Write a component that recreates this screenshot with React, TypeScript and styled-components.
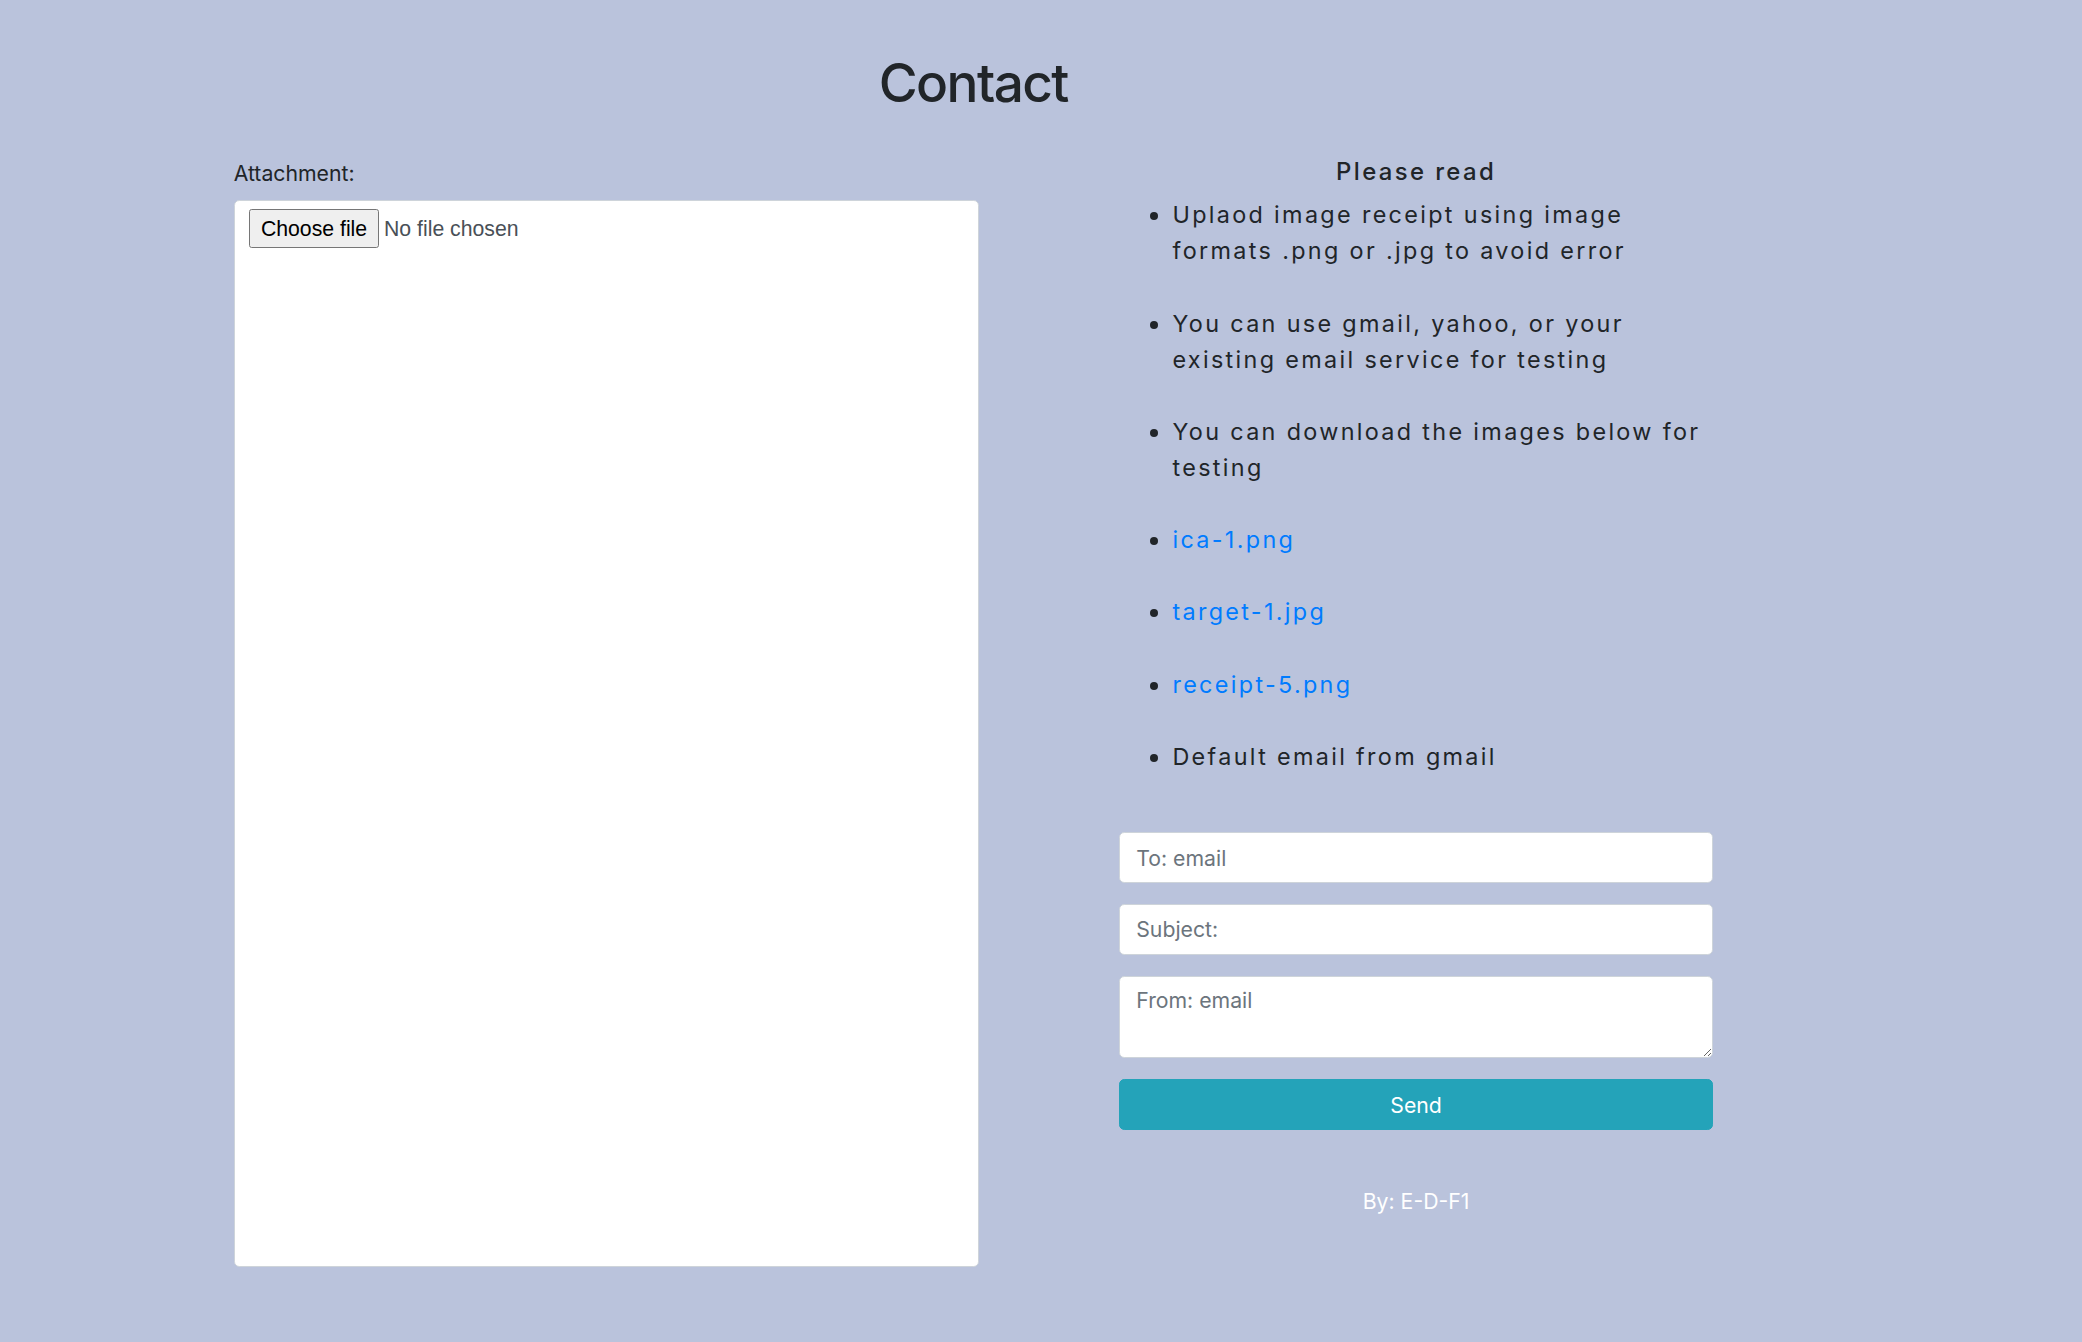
import * as React from 'react';
import styled, { createGlobalStyle } from 'styled-components';

// the reference was taken at ~133% browser zoom, so lay out in its css px and scale once
const SCALE = 2082 / 1568;

const bg = '#bac3dc';
const text = '#212529';
const link = '#007bff';
const info = '#24a3b9';

const GlobalStyle = createGlobalStyle`
  body {
    margin: 0;
    background: ${bg};
    font-family: Inter, "Noto Sans", sans-serif;
    color: ${text};
  }
  * {
    box-sizing: border-box;
  }
`;

const Page = styled.div`
  zoom: ${SCALE};
  min-height: 1011px;
  padding-top: 39px;
`;

const Container = styled.div`
  width: 1114px;
  margin-left: 176px;
`;

const Title = styled.h1`
  margin: 0 0 32px;
  font-size: 40px;
  font-weight: 500;
  line-height: 1.2;
  letter-spacing: -1.2px;
  text-align: center;
  color: ${text};
`;

const Row = styled.div`
  display: grid;
  grid-template-columns: 561px 447px;
  column-gap: 106px;
  align-items: start;
`;

const Label = styled.label`
  display: block;
  margin-bottom: 8px;
  font-size: 16px;
  line-height: 24px;
`;

const FileBox = styled.div`
  height: 803px;
  padding: 6px 11px;
  background: #fff;
  border: 1px solid #ced4da;
  border-radius: 4px;
  display: flex;
  align-items: flex-start;
  gap: 4px;
  font-family: "Liberation Sans", Arial, sans-serif;
  font-size: 16px;
`;

const FileButton = styled.button`
  font-family: inherit;
  font-size: 16px;
  color: #000;
  background: #efefef;
  border: 1px solid #767676;
  border-radius: 2px;
  padding: 5px 8px 4px;
  line-height: normal;
`;

const FileName = styled.span`
  color: #495057;
  line-height: 31px;
`;

const Side = styled.div`
  display: flex;
  flex-direction: column;
`;

const ReadTitle = styled.h5`
  margin: 0 0 8px;
  font-size: 18px;
  font-weight: 500;
  line-height: 1.2;
  letter-spacing: 0.1em;
  text-align: center;
`;

const Notes = styled.ul`
  margin: 0 0 16px;
  padding-left: 40px;
  font-size: 17.6px;
  line-height: 27.2px;
  letter-spacing: 0.1em;
`;

const Note = styled.li`
  margin-bottom: 27.2px;
`;

const FileLink = styled.a`
  color: ${link};
  text-decoration: none;
`;

const Field = styled.input`
  display: block;
  width: 100%;
  height: 38px;
  margin-bottom: 16px;
  padding: 6px 12px;
  font-family: inherit;
  font-size: 16px;
  line-height: 1.5;
  color: #495057;
  background: #fff;
  border: 1px solid #ced4da;
  border-radius: 4px;

  &::placeholder {
    color: #6c757d;
  }
`;

const Area = styled.textarea`
  display: block;
  width: 100%;
  height: 62px;
  margin-bottom: 16px;
  padding: 6px 12px;
  font-family: inherit;
  font-size: 16px;
  line-height: 1.5;
  color: #495057;
  background: #fff;
  border: 1px solid #ced4da;
  border-radius: 4px;

  &::placeholder {
    color: #6c757d;
  }
`;

const SendButton = styled.button`
  width: 100%;
  height: 38px;
  font-family: inherit;
  font-size: 16px;
  color: #fff;
  background: ${info};
  border: 1px solid ${info};
  border-radius: 4px;
`;

const Credit = styled.p`
  margin: 42px 0 0;
  font-size: 16px;
  line-height: 24px;
  color: #fff;
  text-align: center;
`;

const files = ['ica-1.png', 'target-1.jpg', 'receipt-5.png'];

export default function App() {
  return (
    <>
      <GlobalStyle />
      <Page>
        <Container>
          <Title>Contact</Title>
          <Row>
            <div>
              <Label>Attachment:</Label>
              <FileBox>
                <FileButton type="button">Choose file</FileButton>
                <FileName>No file chosen</FileName>
              </FileBox>
            </div>
            <Side>
              <ReadTitle>Please read</ReadTitle>
              <Notes>
                <Note>Uplaod image receipt using image formats .png or .jpg to avoid error</Note>
                <Note>You can use gmail, yahoo, or your existing email service for testing</Note>
                <Note>You can download the images below for testing</Note>
                {files.map((f) => (
                  <Note key={f}>
                    <FileLink href="#">{f}</FileLink>
                  </Note>
                ))}
                <Note>Default email from gmail</Note>
              </Notes>
              <Field placeholder="To: email" />
              <Field placeholder="Subject:" />
              <Area placeholder="From: email" />
              <SendButton type="button">Send</SendButton>
              <Credit>By: E-D-F1</Credit>
            </Side>
          </Row>
        </Container>
      </Page>
    </>
  );
}
